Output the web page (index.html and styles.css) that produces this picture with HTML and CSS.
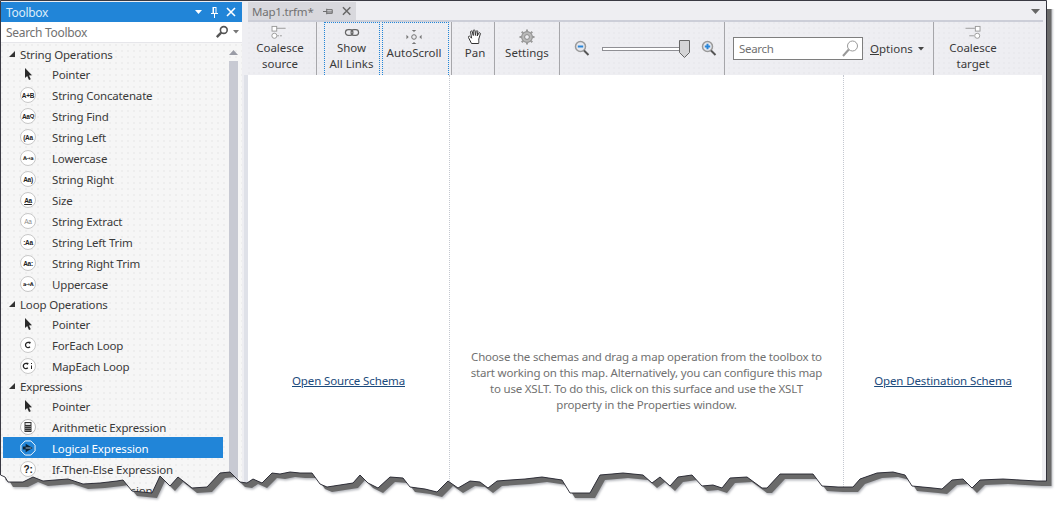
FILE: index.html
```html
<!DOCTYPE html>
<html lang="en">
<head>
    <meta charset="UTF-8">
    <title>Map1.trfm - Toolbox</title>
    <link rel="stylesheet" href="styles.css">
</head>
<body>
    <svg class="defs" width="0" height="0">
        <symbol id="pointer" viewBox="0 0 12 14">
            <path d="M3 1 L3 11 L5.2 9 L7 13 L8.8 12.2 L7 8.4 L10 8.2 Z" fill="#2a2a2a"/>
        </symbol>
    </svg>

    <div class="window">
        <div class="toolbox">
            <div class="panel-title">
                <span>Toolbox</span>
                <div class="panel-buttons">
                    <svg width="8" height="5" viewBox="0 0 8 5"><path d="M0 0H7L3.5 4Z" fill="#fff"/></svg>
                    <svg width="9" height="12" viewBox="0 0 9 12"><path d="M2.5 1H6.5V7H8V8H5V12H4V8H1V7H2.5Z M4 2V7H5.5V2Z" fill="#fff" fill-rule="evenodd"/></svg>
                    <svg width="10" height="10" viewBox="0 0 10 10"><path d="M1 1L9 9M9 1L1 9" stroke="#fff" stroke-width="1.6"/></svg>
                </div>
            </div>
            <div class="panel-search">
                <span>Search Toolbox</span>
                <svg width="14" height="14" viewBox="0 0 14 14"><circle cx="8.8" cy="5" r="3.4" fill="none" stroke="#555" stroke-width="1.6"/><path d="M6.2 7.6L1.8 12.2" stroke="#555" stroke-width="2.4"/></svg>
                <svg class="search-caret" width="6" height="4" viewBox="0 0 6 4"><path d="M0 0H6L3 3.5Z" fill="#777"/></svg>
            </div>
            <div class="panel-body">
                <div class="list">
                    <div class="group"><i class="tri"></i>String Operations</div>
                    <div class="item item-pointer"><span class="slot"><svg width="12" height="14"><use href="#pointer"/></svg></span>Pointer</div>
                    <div class="item"><span class="op">A+B</span>String Concatenate</div>
                    <div class="item"><span class="op">Aa<sup>Q</sup></span>String Find</div>
                    <div class="item"><span class="op">(Aa</span>String Left</div>
                    <div class="item"><span class="op op-arrow">A→a</span>Lowercase</div>
                    <div class="item"><span class="op">Aa)</span>String Right</div>
                    <div class="item"><span class="op op-under">Aa</span>Size</div>
                    <div class="item"><span class="op op-faint">Aa</span>String Extract</div>
                    <div class="item"><span class="op">:Aa</span>String Left Trim</div>
                    <div class="item"><span class="op">Aa:</span>String Right Trim</div>
                    <div class="item"><span class="op op-arrow">a→A</span>Uppercase</div>
                    <div class="group"><i class="tri"></i>Loop Operations</div>
                    <div class="item item-pointer"><span class="slot"><svg width="12" height="14"><use href="#pointer"/></svg></span>Pointer</div>
                    <div class="item"><span class="slot">
                        <svg width="16" height="16" viewBox="0 0 16 16"><circle cx="8" cy="8" r="7.5" fill="#fff" stroke="#c8c8c8"/><path d="M10 6.2A2.6 2.6 0 1 0 10 9.8" fill="none" stroke="#222" stroke-width="1.3"/><path d="M8.6 4.6L10.8 5L10 7Z" fill="#222"/></svg>
                    </span>ForEach Loop</div>
                    <div class="item"><span class="slot">
                        <svg width="16" height="16" viewBox="0 0 16 16"><circle cx="8" cy="8" r="7.5" fill="#fff" stroke="#c8c8c8"/><path d="M7.8 6.2A2.6 2.6 0 1 0 7.8 9.8" fill="none" stroke="#222" stroke-width="1.3"/><path d="M6.4 4.6L8.6 5L7.8 7Z" fill="#222"/><path d="M11 5H12V6H11ZM11 7.5H12V11H11Z" fill="#222"/></svg>
                    </span>MapEach Loop</div>
                    <div class="group"><i class="tri"></i>Expressions</div>
                    <div class="item item-pointer"><span class="slot"><svg width="12" height="14"><use href="#pointer"/></svg></span>Pointer</div>
                    <div class="item"><span class="slot">
                        <svg width="16" height="16" viewBox="0 0 16 16"><circle cx="8" cy="8" r="7.5" fill="#fff" stroke="#bcbcbc"/><rect x="4.5" y="3" width="7" height="10" fill="#333"/><rect x="5.5" y="4" width="5" height="2" fill="#ddd"/><path d="M5.5 7.5H10.5M5.5 9.5H10.5M5.5 11.5H10.5" stroke="#ccc" stroke-dasharray="1 1"/></svg>
                    </span>Arithmetic Expression</div>
                    <div class="item item-selected"><span class="slot">
                        <svg width="16" height="16" viewBox="0 0 17 17"><path d="M5.5 1H11.5L16 5.5V11.5L11.5 16H5.5L1 11.5V5.5Z" fill="none" stroke="#fff"/><path d="M3 7H6V4L13.5 8.5L6 13V10H3Z" fill="#0e2438"/><path d="M6 8.5H12" stroke="#cfe4f7" stroke-width=".8"/></svg>
                    </span>Logical Expression</div>
                    <div class="item"><span class="op op-tight">?:</span>If-Then-Else Expression</div>
                    <div class="item"><span class="slot"></span>Custom Expression</div>
                </div>
                <div class="scrollbar">
                    <svg width="9" height="5" viewBox="0 0 9 5"><path d="M4.5 0L9 5H0Z" fill="#9a9ca6"/></svg>
                    <div class="thumb"></div>
                </div>
            </div>
        </div>

        <div class="main">
            <div class="tabstrip">
                <div class="tab">
                    <span>Map1.trfm*</span>
                    <svg width="11" height="9" viewBox="0 0 11 9"><path d="M0 4.5H4M4 1.5V7.5M4 2.5H10V6.5H4M4 5H10" fill="none" stroke="#666"/></svg>
                    <svg width="10" height="10" viewBox="0 0 10 10"><path d="M1 1L9 9M9 1L1 9" stroke="#666" stroke-width="1.6"/></svg>
                </div>
                <svg class="tab-menu" width="9" height="5" viewBox="0 0 9 5"><path d="M0 0H9L4.5 5Z" fill="#666"/></svg>
            </div>

            <div class="toolbar">
                <div class="tool tool-source">
                    <svg class="tool-icon" width="20" height="16" viewBox="0 0 20 16"><rect x="1.5" y="1.5" width="5" height="5" fill="#fff" stroke="#999"/><path d="M6.5 3.5H16" stroke="#999"/><circle cx="4" cy="11.5" r="2.7" fill="#fff" stroke="#999"/><path d="M7 11.5H12" stroke="#999" stroke-dasharray="2 1"/></svg>
                    <span>Coalesce<br>source</span>
                </div>
                <div class="tool tool-toggle tool-links">
                    <svg class="tool-icon" width="16" height="16" viewBox="0 0 16 16"><rect x="1" y="5" width="8" height="6" rx="3" fill="none" stroke="#666" stroke-width="1.3"/><rect x="7" y="5" width="8" height="6" rx="3" fill="none" stroke="#666" stroke-width="1.3"/></svg>
                    <span>Show<br>All Links</span>
                </div>
                <div class="tool tool-toggle tool-single tool-scroll">
                    <svg class="tool-icon" width="20" height="18" viewBox="0 0 20 18"><circle cx="10" cy="9" r="2.6" fill="none" stroke="#666"/><path d="M7.5 1H12.5L10 3.5ZM7.5 17H12.5L10 14.5ZM1.5 6.5V11.5L4 9ZM18.5 6.5V11.5L16 9Z" fill="#777"/></svg>
                    <span>AutoScroll</span>
                </div>
                <div class="tool tool-single tool-pan">
                    <svg class="tool-icon" width="16" height="16" viewBox="0 0 16 16"><path d="M4.5 14.5L1.5 8.5C1 7 2.6 6.6 3.4 7.8L4.6 9.2L3.6 3C3.4 1.8 5 1.6 5.3 2.8L6.3 6.5L6.2 1.8C6.2.6 8 .6 8 1.8L8.4 6.4L9.2 2.4C9.5 1.2 11 1.6 10.8 2.8L10.2 7L11.8 4.2C12.4 3.2 13.8 3.8 13.3 5L11.8 10C11.6 12 12 13 11.6 14.5Z" fill="#fff" stroke="#333"/></svg>
                    <span>Pan</span>
                </div>
                <div class="tool tool-single tool-settings">
                    <svg class="tool-icon" width="16" height="16" viewBox="0 0 16 16"><circle cx="8" cy="8" r="5.4" fill="#b9b9b9" stroke="#8a8a8a"/><circle cx="8" cy="8" r="2.4" fill="#eeeef2" stroke="#8a8a8a"/><path d="M8 .5V3M8 13V15.5M.5 8H3M13 8H15.5M2.7 2.7L4.4 4.4M11.6 11.6L13.3 13.3M13.3 2.7L11.6 4.4M4.4 11.6L2.7 13.3" stroke="#999" stroke-width="2"/></svg>
                    <span>Settings</span>
                </div>
                <div class="tool-group zoom">
                    <svg width="16" height="17" viewBox="0 0 16 17"><circle cx="6.5" cy="6.5" r="5" fill="#e6e8ee" stroke="#9a9a9a" stroke-width="1.5"/><path d="M3.8 6.5H9.2" stroke="#2a86d8" stroke-width="2"/><path d="M10 10.5L14.5 15" stroke="#555" stroke-width="2"/></svg>
                    <div class="slider">
                        <div class="track"></div>
                        <svg class="thumb-mark" width="11" height="18" viewBox="0 0 11 18"><path d="M.5 .5H10.5V12.5L5.5 17.5L.5 12.5Z" fill="#d4d4d6" stroke="#666"/></svg>
                    </div>
                    <svg width="16" height="17" viewBox="0 0 16 17"><circle cx="6.5" cy="6.5" r="5" fill="#e6e8ee" stroke="#9a9a9a" stroke-width="1.5"/><path d="M3.8 6.5H9.2M6.5 3.8V9.2" stroke="#2a86d8" stroke-width="2"/><path d="M10 10.5L14.5 15" stroke="#555" stroke-width="2"/></svg>
                </div>
                <div class="tool-group find">
                    <div class="search-box">
                        <span>Search</span>
                        <svg width="20" height="20" viewBox="0 0 20 20"><circle cx="12.5" cy="7" r="5" fill="#fff" stroke="#999"/><path d="M8.8 10.5L3 17" stroke="#999" stroke-width="2"/></svg>
                    </div>
                    <div class="options"><span><u>O</u>ptions</span><svg width="6" height="4" viewBox="0 0 6 4"><path d="M0 0H6L3 3.5Z" fill="#444"/></svg></div>
                </div>
                <div class="tool tool-target">
                    <svg class="tool-icon" width="20" height="16" viewBox="0 0 20 16"><path d="M2 3.5H12M6 11.5H11" stroke="#999"/><rect x="12.5" y="1.5" width="5" height="5" fill="#fff" stroke="#999"/><circle cx="14.5" cy="11.5" r="2.7" fill="#fff" stroke="#999"/></svg>
                    <span>Coalesce<br>target</span>
                </div>
            </div>

            <div class="surface">
                <div class="pane pane-source"><a href="#">Open Source Schema</a></div>
                <div class="pane pane-map">
                    <p>Choose the schemas and drag a map operation from the toolbox to<br>
                    start working on this map. Alternatively, you can configure this map<br>
                    to use XSLT. To do this, click on this surface and use the XSLT<br>
                    property in the Properties window.</p>
                </div>
                <div class="pane pane-target"><a href="#">Open Destination Schema</a></div>
            </div>
        </div>
    </div>

    <!-- torn paper edge over the bottom of the screenshot -->
    <svg class="tear" width="1062" height="514" viewBox="0 0 1062 514">
        <defs>
            <path id="sheet" d="M.5 .5V475L5 477L8 482L23 482L33 477L43 481L55 480L68 479L83 484L100 483L117 481L123 480L132 491L152 493L160 476L170 486L178 477L192 488L207 487L220 473L230 472L240 482L247 483L253 479L262 483L272 473L280 474L290 472L300 473L312 473L320 484L327 487L340 485L353 483L360 475L368 483L378 488L390 477L403 478L410 487L425 489L437 492L448 481L458 488L470 481L480 482L488 488L497 481L510 480L525 479L542 477L562 480L570 493L590 493L600 475L612 474L623 473L643 475L652 483L660 477L670 486L678 477L692 475L702 486L713 485L722 488L730 478L747 477L762 488L767 488L780 474L795 474L813 474L822 486L838 487L853 487L860 479L877 473L893 472L905 475L912 486L933 488L942 489L952 480L963 479L972 488L980 480L1003 479L1020 480L1037 481L1046.5 481V.5Z"/>
            <clipPath id="outside"><path clip-rule="evenodd" d="M0 0H1062V514H0Z M.5 .5V475L5 477L8 482L23 482L33 477L43 481L55 480L68 479L83 484L100 483L117 481L123 480L132 491L152 493L160 476L170 486L178 477L192 488L207 487L220 473L230 472L240 482L247 483L253 479L262 483L272 473L280 474L290 472L300 473L312 473L320 484L327 487L340 485L353 483L360 475L368 483L378 488L390 477L403 478L410 487L425 489L437 492L448 481L458 488L470 481L480 482L488 488L497 481L510 480L525 479L542 477L562 480L570 493L590 493L600 475L612 474L623 473L643 475L652 483L660 477L670 486L678 477L692 475L702 486L713 485L722 488L730 478L747 477L762 488L767 488L780 474L795 474L813 474L822 486L838 487L853 487L860 479L877 473L893 472L905 475L912 486L933 488L942 489L952 480L963 479L972 488L980 480L1003 479L1020 480L1037 481L1046.5 481V.5Z"/></clipPath>
            <filter id="soft"><feGaussianBlur stdDeviation="1"/></filter>
        </defs>
        <g clip-path="url(#outside)">
            <rect width="1062" height="514" fill="#fff"/>
            <use href="#sheet" transform="translate(6 6.5)" fill="#b4b6bc" filter="url(#soft)"/>
            <use href="#sheet" transform="translate(5 5)" fill="#6a6a6a"/>
            <rect x="1047" width="15" height="9" fill="#fff"/>
        </g>
        <use href="#sheet" fill="none" stroke="#24242e" stroke-width=".9"/>
    </svg>
</body>
</html>
```

FILE: styles.css
```css
* {
    margin: 0;
    padding: 0;
    box-sizing: border-box;
}

html, body {
    height: 514px;
    overflow: hidden;
}

body {
    background-color: white;
    font-family: 'Noto Sans', 'Open Sans', sans-serif;
    font-size: 11.5px;
    color: #3a3a3a;
}

.defs {
    position: absolute;
}

.window {
    display: flex;
    width: 1046px;
    height: 514px;
    overflow: hidden;
    padding: 2px 0 0 1px;
    background-color: #eeeef2;
}

.tear {
    position: absolute;
    left: 0;
    top: 0;
}

/* toolbox panel */

.toolbox {
    width: 241px;
    display: flex;
    flex-direction: column;
    background-color: #f6f6f6;
    background-image: radial-gradient(circle at 1px 1px, #eeeeee 1px, transparent 1px);
    background-size: 6px 6px;
}

.panel-title {
    height: 20px;
    padding: 0 6px 0 5px;
    display: flex;
    align-items: center;
    justify-content: space-between;
    background-color: #2185d8;
    color: #dcecfa;
    font-size: 12px;
    letter-spacing: -0.3px;
}

.panel-buttons {
    display: flex;
    align-items: center;
    gap: 7px;
}

.panel-search {
    height: 21px;
    padding: 0 3px 0 5px;
    display: flex;
    align-items: center;
    background-color: white;
    color: #717171;
    font-size: 12px;
    letter-spacing: -0.3px;
    border-bottom: 1px solid #e6e6ea;
}

.panel-search span {
    flex: 1;
}

.search-caret {
    margin-left: 4px;
}

.panel-body {
    flex: 1;
    display: flex;
    margin-top: 1px;
}

.list {
    flex: 1;
    padding: 0 4px 0 2px;
    letter-spacing: -0.17px;
}

.group {
    height: 20px;
    display: flex;
    align-items: center;
    padding-left: 6px;
}

.tri {
    width: 0;
    height: 0;
    margin-right: 5px;
    border-bottom: 6px solid #333;
    border-left: 6px solid transparent;
}

.item {
    height: 21px;
    padding-top: 1px;
    display: flex;
    align-items: center;
}

.item-pointer {
    height: 20px;
    padding-top: 0;
}

.item-selected {
    background-color: #2185d8;
    color: white;
}

.slot,
.op {
    width: 16px;
    height: 16px;
    margin: 0 16px 0 17px;
    flex: none;
    display: flex;
    align-items: center;
    justify-content: center;
}

.op {
    border: 1px solid #c8c8c8;
    border-radius: 50%;
    background-color: white;
    font-family: 'Liberation Sans', sans-serif;
    font-size: 6.5px;
    font-weight: bold;
    letter-spacing: -0.3px;
    color: #222;
    white-space: nowrap;
    overflow: hidden;
}

.op sup {
    font-size: 6px;
    line-height: 0;
}

.op-arrow {
    font-family: 'DejaVu Sans', sans-serif;
    font-size: 5px;
    letter-spacing: -0.4px;
}

.op-under {
    text-decoration: underline;
}

.op-faint {
    color: #8a8a8a;
    font-weight: normal;
}

.op-tight {
    font-size: 10px;
}

.scrollbar {
    width: 15px;
    padding: 6px 4px 0 2px;
    display: flex;
    flex-direction: column;
    align-items: center;
}

.thumb {
    width: 100%;
    flex: 1;
    margin-top: 6px;
    background-color: #c8cad3;
}

/* document area */

.main {
    flex: 1;
    margin-left: 6px;
    display: flex;
    flex-direction: column;
    padding-right: 4px;
}

.tabstrip {
    height: 20px;
    flex: none;
    display: flex;
    align-items: flex-start;
    justify-content: space-between;
    border-bottom: 2px solid #ccced8;
    margin-right: -1px;
}

.tab {
    width: 108px;
    height: 18px;
    padding: 0 5px 0 4px;
    display: flex;
    align-items: center;
    gap: 9px;
    background-color: #d8d8dd;
    color: #717171;
    letter-spacing: -0.2px;
}

.tab span {
    flex: 1;
}

.tab-menu {
    margin: 7px 3px 0 0;
}

.toolbar {
    height: 53px;
    flex: none;
    display: flex;
    background-color: #eeeef2;
    background-image: radial-gradient(circle at 1px 1px, #eaeaee 1px, transparent 1px);
    background-size: 5px 5px;
}

.tool {
    display: flex;
    flex-direction: column;
    align-items: center;
    padding-top: 3px;
    line-height: 16px;
    text-align: center;
    border-right: 1px solid #a6a6aa;
}

.tool-icon {
    flex: none;
    height: 15px;
}

.tool-single {
    padding-top: 7px;
}

.tool-single .tool-icon {
    height: 16px;
}

.tool-source {
    width: 69px;
    padding-right: 4px;
}

.tool-toggle {
    padding-top: 2px;
    border: 1px dotted #2185d8;
    border-bottom: none;
}

.tool-links {
    width: 56px;
    margin-left: 7px;
    padding-right: 1px;
}

.tool-scroll {
    width: 67px;
    margin-left: 2px;
    padding-top: 6px;
    padding-right: 3px;
}

.tool-pan {
    width: 44px;
    margin-left: 2px;
    padding-left: 4px;
    border-left: 1px solid #a6a6aa;
}

.tool-settings {
    width: 65px;
}

.tool-target {
    width: 78px;
    border-right: none;
}

.tool-group {
    display: flex;
    align-items: center;
    border-right: 1px solid #a6a6aa;
}

.zoom {
    width: 165px;
    padding-left: 14px;
}

.slider {
    width: 88px;
    height: 18px;
    margin: 0 11px 0 12px;
    display: flex;
    align-items: center;
    position: relative;
}

.track {
    width: 78px;
    height: 4px;
    border: 1px solid #8f8f94;
    background-color: white;
}

.thumb-mark {
    position: absolute;
    right: 0;
    top: 0;
}

.find {
    width: 209px;
    padding-left: 8px;
}

.search-box {
    width: 130px;
    height: 23px;
    padding: 0 2px 0 5px;
    display: flex;
    align-items: center;
    justify-content: space-between;
    border: 1px solid #7e7e7e;
    background-color: white;
    color: #717171;
    letter-spacing: -0.3px;
}

.options {
    margin-left: 7px;
    display: flex;
    align-items: center;
    gap: 5px;
}

.surface {
    height: 612px;
    flex: none;
    display: flex;
    background-color: white;
    color: #717171;
    box-shadow: -4px 0 0 #dfe1e8;
}

.pane {
    display: flex;
    align-items: center;
    justify-content: center;
    text-align: center;
    white-space: nowrap;
    line-height: 16px;
}

.pane p {
    letter-spacing: -0.2px;
}

.pane-source {
    width: 202px;
    border-right: 1px dotted #c4c8d0;
}

.pane-map {
    width: 394px;
    border-right: 1px dotted #c4c8d0;
}

.pane-target {
    flex: 1;
}

.pane a {
    color: #1b4a7c;
    letter-spacing: -0.12px;
}
```
